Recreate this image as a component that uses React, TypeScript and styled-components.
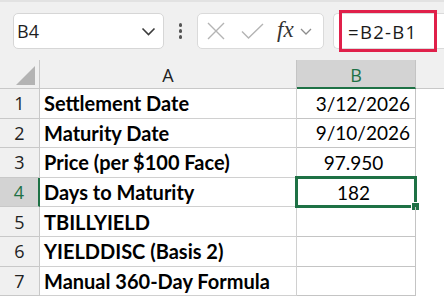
import styled, { createGlobalStyle } from "styled-components";

const GlobalStyle = createGlobalStyle`
  body {
    margin: 0;
    background: #ffffff;
    font-family: "Liberation Sans", Arial, sans-serif;
  }
`;

const rows = [
  { label: "Settlement Date", value: "3/12/2026", align: "right" },
  { label: "Maturity Date", value: "9/10/2026", align: "right" },
  { label: "Price (per $100 Face)", value: "97.950", align: "center" },
  { label: "Days to Maturity", value: "182", align: "center" },
  { label: "TBILLYIELD", value: "", align: "right" },
  { label: "YIELDDISC (Basis 2)", value: "", align: "right" },
  { label: "Manual 360-Day Formula", value: "", align: "right" },
];

const ACTIVE_ROW = 4;

export default function App() {
  return (
    <Page>
      <GlobalStyle />
      <Toolbar>
        <NameBox>
          <span>B4</span>
          <Chevron width="15" height="9" viewBox="0 0 15 9">
            <path d="M1.5 1.5 L7.5 7.5 L13.5 1.5" />
          </Chevron>
        </NameBox>
        <Dots>
          <i />
          <i />
          <i />
        </Dots>
        <FxBox>
          <svg width="20" height="18" viewBox="0 0 20 18">
            <path d="M2 1 L18 17 M18 1 L2 17" stroke="#b4b4b4" strokeWidth="1.4" fill="none" />
          </svg>
          <svg width="23" height="16" viewBox="0 0 23 16">
            <path d="M1 8.5 L7.5 15 L22 1" stroke="#b4b4b4" strokeWidth="1.4" fill="none" />
          </svg>
          <FxLabel>fx</FxLabel>
          <SmallChevron width="12" height="7" viewBox="0 0 12 7">
            <path d="M1 1 L6 6 L11 1" />
          </SmallChevron>
        </FxBox>
        <FormulaBar>
          <FormulaText>=B2-B1</FormulaText>
          <Highlight />
        </FormulaBar>
      </Toolbar>
      <Sheet>
        <Corner>
          <Triangle />
        </Corner>
        <ColHeader>A</ColHeader>
        <ColHeader $active>B</ColHeader>
        <Filler $header />
        {rows.map((r, i) => {
          const n = i + 1;
          const active = n === ACTIVE_ROW;
          return [
            <RowHeader key={`h${n}`} $active={active}>
              {n}
            </RowHeader>,
            <LabelCell key={`a${n}`}>{r.label}</LabelCell>,
            <ValueCell key={`b${n}`} $align={r.align}>
              {r.value}
              {active && (
                <Selection>
                  <Handle />
                </Selection>
              )}
            </ValueCell>,
            <Filler key={`f${n}`} />,
          ];
        })}
      </Sheet>
    </Page>
  );
}

const Page = styled.div`
  width: 444px;
  height: 298px;
  overflow: hidden;
`;

const Toolbar = styled.div`
  height: 60px;
  box-sizing: border-box;
  background: #f0f0f0;
  border-top: 2px solid #e2e2e2;
  display: flex;
  align-items: center;
  padding-left: 13px;
`;

const NameBox = styled.div`
  width: 151px;
  height: 36px;
  box-sizing: border-box;
  background: #ffffff;
  border: 1px solid #d6d6d6;
  border-radius: 5px;
  display: flex;
  align-items: center;
  justify-content: space-between;
  padding: 0 7px 0 3px;
  font-family: "Open Sans", sans-serif;
  font-size: 18px;
  color: #1f1f1f;
`;

const Chevron = styled.svg`
  fill: none;
  stroke: #3c3c3c;
  stroke-width: 1.6;
`;

const SmallChevron = styled.svg`
  fill: none;
  stroke: #8c8c8c;
  stroke-width: 1.3;
`;

const Dots = styled.div`
  width: 33px;
  display: flex;
  flex-direction: column;
  align-items: center;
  gap: 2.5px;
  i {
    width: 3.5px;
    height: 3.5px;
    border-radius: 50%;
    background: #555;
  }
`;

const FxBox = styled.div`
  width: 127px;
  height: 36px;
  box-sizing: border-box;
  background: #ffffff;
  border: 1px solid #dadada;
  border-radius: 5px;
  display: flex;
  align-items: center;
  padding-left: 8px;
  svg:nth-child(2) {
    margin-left: 15px;
  }
`;

const FxLabel = styled.span`
  font-family: "Liberation Serif", serif;
  font-style: italic;
  font-size: 23px;
  color: #333;
  margin-left: 13px;
  margin-right: 6px;
  margin-top: -2px;
`;

const FormulaBar = styled.div`
  flex: 1;
  height: 36px;
  margin-left: 9px;
  box-sizing: border-box;
  background: #ffffff;
  border: 1px solid #dadada;
  border-right: none;
  border-radius: 5px 0 0 5px;
  position: relative;
  display: flex;
  align-items: center;
  padding-left: 14px;
`;

const FormulaText = styled.span`
  font-family: "Open Sans", sans-serif;
  font-size: 18.5px;
  color: #1a1a1a;
  letter-spacing: 1.3px;
`;

const Highlight = styled.div`
  position: absolute;
  left: 5px;
  top: -4px;
  width: 98px;
  height: 42px;
  box-sizing: border-box;
  border: 3px solid #e0204a;
`;

const Sheet = styled.div`
  display: grid;
  grid-template-columns: 40px 257px 119px 1fr;
  grid-template-rows: 29px repeat(7, 29.6px);
  font-family: "Lato", "Liberation Sans", sans-serif;
`;

const Corner = styled.div`
  background: #f0f0f0;
  border-right: 1px solid #c8c8c8;
  border-bottom: 1px solid #c8c8c8;
  position: relative;
`;

const Triangle = styled.div`
  position: absolute;
  right: 4px;
  bottom: 3px;
  width: 0;
  height: 0;
  border-left: 19px solid transparent;
  border-bottom: 19px solid #b3b3b3;
`;

const ColHeader = styled.div<{ $active?: boolean }>`
  box-sizing: border-box;
  background: ${(p) => (p.$active ? "#d3d3d3" : "#f0f0f0")};
  color: ${(p) => (p.$active ? "#1e7145" : "#222")};
  border-right: 1px solid #c4c4c4;
  border-bottom: ${(p) => (p.$active ? "2px solid #1e7145" : "1px solid #c8c8c8")};
  display: flex;
  align-items: center;
  justify-content: center;
  font-family: "Open Sans", sans-serif;
  font-size: 18px;
  padding-top: 2px;
`;

const Filler = styled.div<{ $header?: boolean }>`
  background: ${(p) => (p.$header ? "#f0f0f0" : "#ffffff")};
  border-bottom: ${(p) => (p.$header ? "1px solid #c8c8c8" : "none")};
`;

const RowHeader = styled.div<{ $active?: boolean }>`
  box-sizing: border-box;
  background: ${(p) => (p.$active ? "#d3d3d3" : "#f0f0f0")};
  color: ${(p) => (p.$active ? "#1e7145" : "#222")};
  border-right: ${(p) => (p.$active ? "2px solid #1e7145" : "1px solid #c8c8c8")};
  border-bottom: 1px solid #c8c8c8;
  display: flex;
  align-items: center;
  justify-content: center;
  font-family: "Open Sans", sans-serif;
  font-size: 18px;
`;

const LabelCell = styled.div`
  box-sizing: border-box;
  border-right: 1px solid #d0d0d0;
  border-bottom: 1px solid #d0d0d0;
  display: flex;
  align-items: center;
  padding-left: 4px;
  font-weight: 700;
  font-size: 20px;
  color: #000;
  white-space: nowrap;
`;

const ValueCell = styled.div<{ $align: string }>`
  box-sizing: border-box;
  position: relative;
  border-right: 1px solid #c4c4c4;
  border-bottom: 1px solid #c4c4c4;
  display: flex;
  align-items: center;
  justify-content: ${(p) => (p.$align === "center" ? "center" : "flex-end")};
  padding-right: 5px;
  font-size: 19px;
  color: #000;
`;

const Selection = styled.div`
  position: absolute;
  left: -2px;
  top: -2px;
  right: -2px;
  bottom: -2px;
  border: 3px solid #1e7145;
  pointer-events: none;
`;

const Handle = styled.div`
  position: absolute;
  right: -6px;
  bottom: -6px;
  width: 7px;
  height: 7px;
  background: #1e7145;
  border: 1px solid #ffffff;
`;
